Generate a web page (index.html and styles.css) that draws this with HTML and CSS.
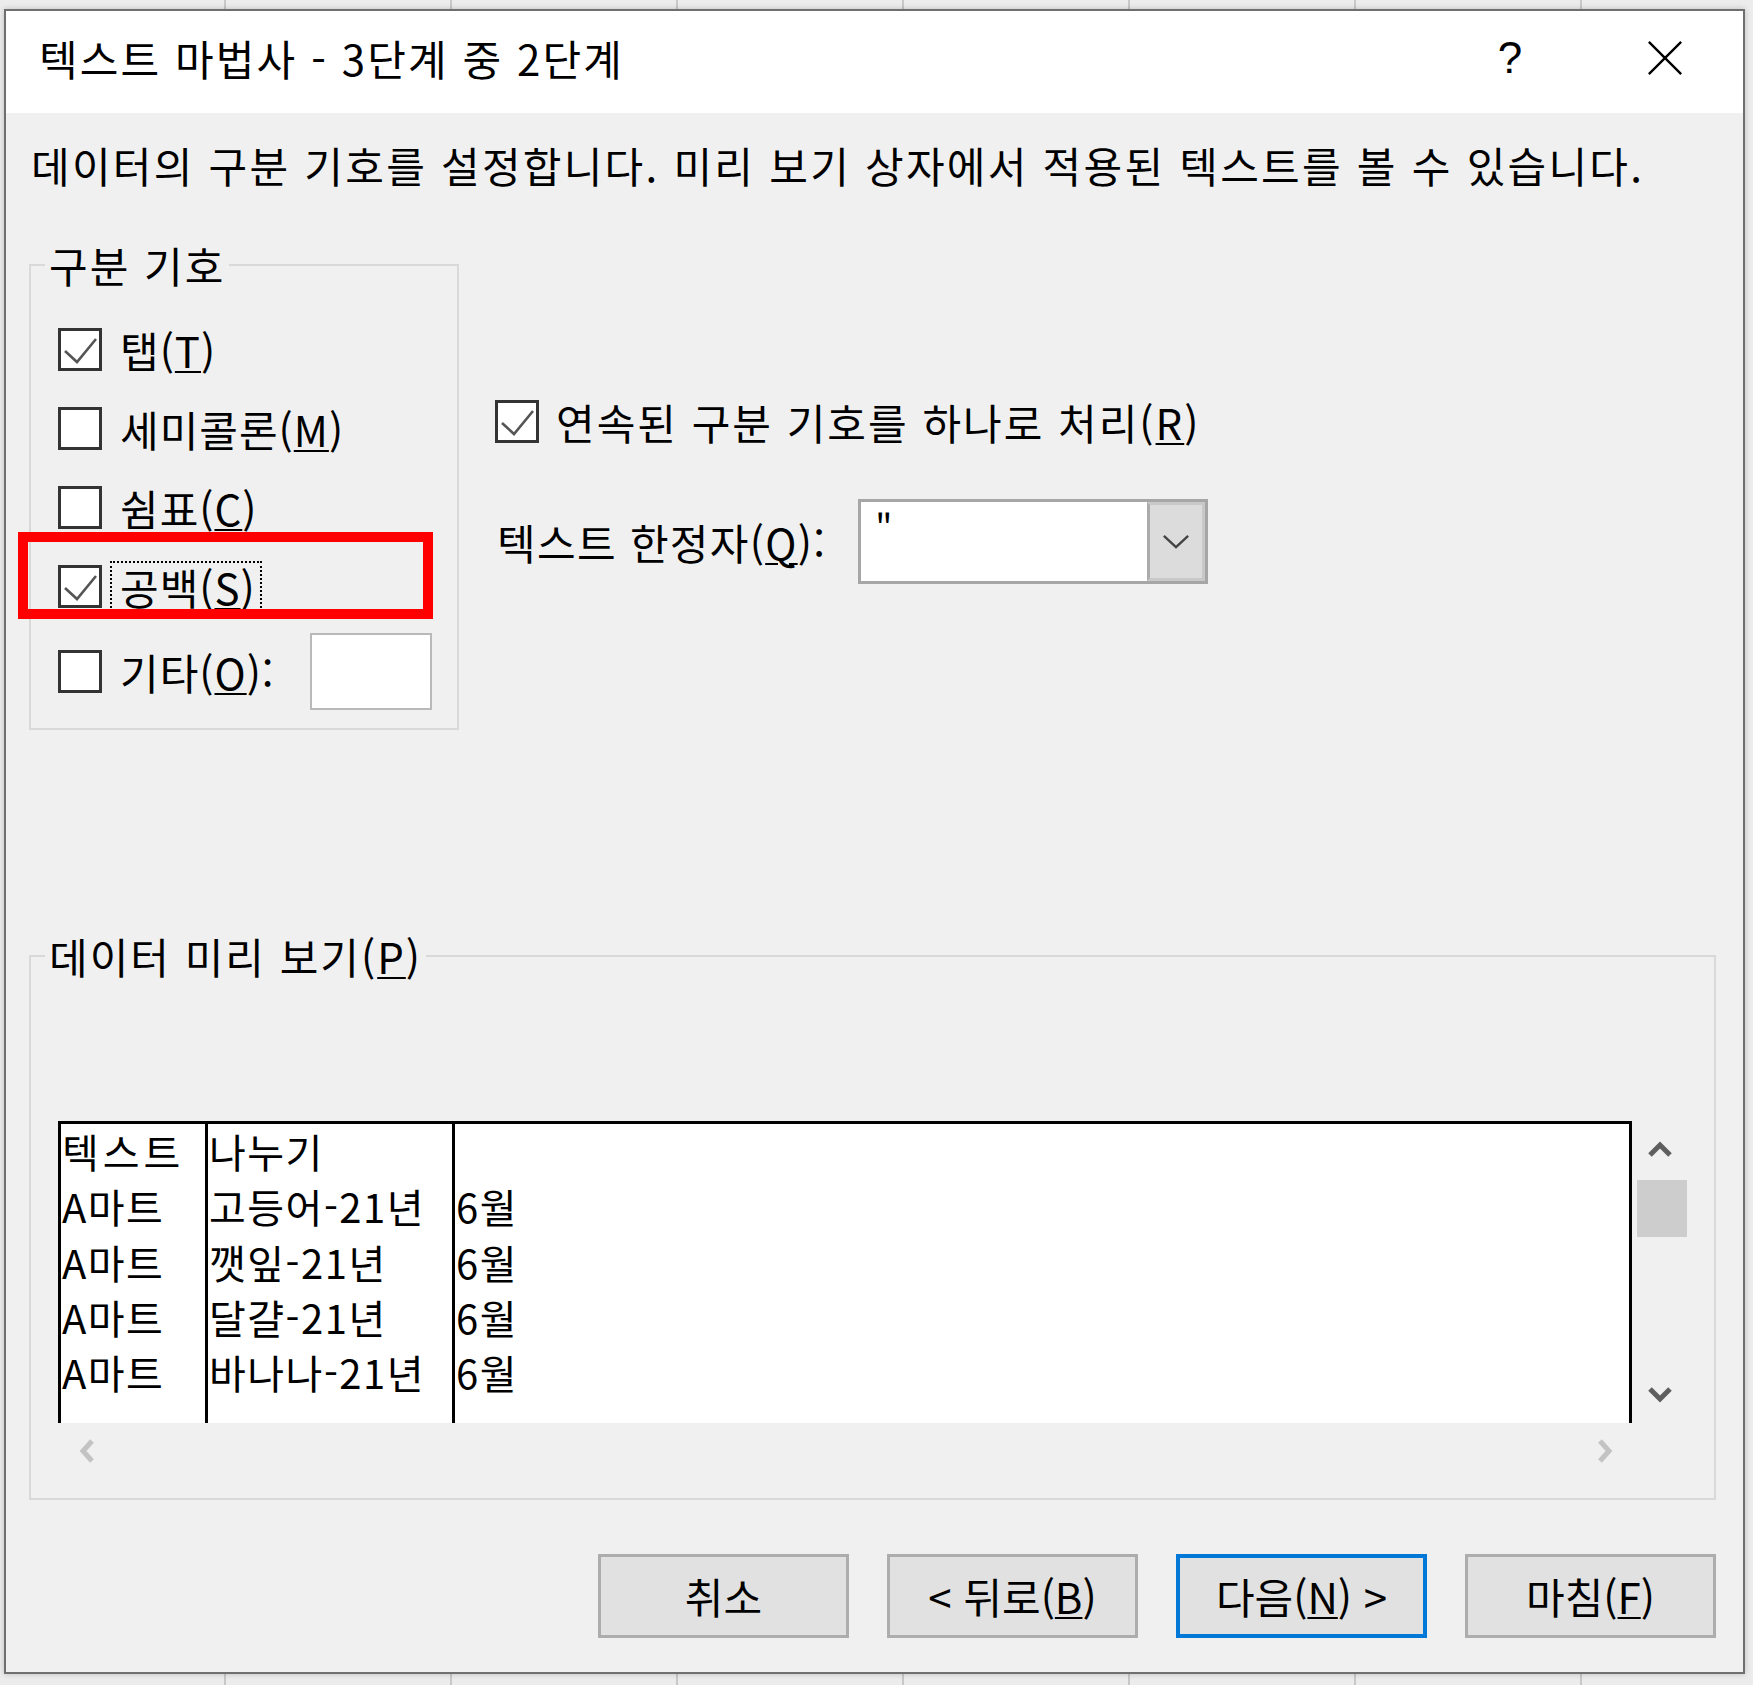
FILE: index.html
```html
<!DOCTYPE html>
<html lang="ko">
<head>
<meta charset="utf-8">
<title>텍스트 마법사</title>
<link rel="stylesheet" href="styles.css">
</head>
<body>
<div class="dialog">
  <div class="titlebar">
    <div class="title">텍스트 마법사 - 3단계 중 2단계</div>
    <span class="help">?</span>
    <svg class="close" viewBox="0 0 40 40"><path d="M3 3L37 37M37 3L3 37"/></svg>
  </div>
  <div class="content">
    <p class="desc">데이터의 구분 기호를 설정합니다. 미리 보기 상자에서 적용된 텍스트를 볼 수 있습니다.</p>
    <div class="top">
      <fieldset class="group delims">
        <legend>구분 기호</legend>
        <div class="chk-row">
          <span class="box"><svg viewBox="0 0 38 37"><path d="M4 20L16 31L35 8"/></svg></span>
          <span class="lbl">탭(<u>T</u>)</span>
        </div>
        <div class="chk-row">
          <span class="box"></span>
          <span class="lbl">세미콜론(<u>M</u>)</span>
        </div>
        <div class="chk-row">
          <span class="box"></span>
          <span class="lbl">쉼표(<u>C</u>)</span>
        </div>
        <div class="chk-row marked">
          <span class="box"><svg viewBox="0 0 38 37"><path d="M4 20L16 31L35 8"/></svg></span>
          <span class="lbl focus">공백(<u>S</u>)</span>
        </div>
        <div class="chk-row other">
          <span class="box"></span>
          <span class="lbl">기타(<u>O</u>):</span>
          <span class="textbox"></span>
        </div>
      </fieldset>
      <div class="options">
        <div class="chk-row">
          <span class="box"><svg viewBox="0 0 38 37"><path d="M4 20L16 31L35 8"/></svg></span>
          <span class="lbl near">연속된 구분 기호를 하나로 처리(<u>R</u>)</span>
        </div>
        <div class="qual-row">
          <span class="qual-lbl">텍스트 한정자(<u>Q</u>):</span>
          <div class="combo">
            <span class="combo-val">"</span>
            <span class="combo-btn"><svg viewBox="0 0 30 16"><path d="M2 2L15 14L28 2"/></svg></span>
          </div>
        </div>
      </div>
    </div>
    <fieldset class="group preview">
      <legend>데이터 미리 보기(<u>P</u>)</legend>
      <div class="pv">
        <div class="pv-data">
          <div class="col c1">
            <div>텍스트</div><div>A마트</div><div>A마트</div><div>A마트</div><div>A마트</div>
          </div>
          <div class="col c2">
            <div>나누기</div><div>고등어-21년</div><div>깻잎-21년</div><div>달걀-21년</div><div>바나나-21년</div>
          </div>
          <div class="col c3">
            <div>&nbsp;</div><div>6월</div><div>6월</div><div>6월</div><div>6월</div>
          </div>
        </div>
        <div class="vscroll">
          <span class="vbtn"><svg viewBox="0 0 26 16"><path d="M3 14L13 4L23 14"/></svg></span>
          <span class="thumb"></span>
          <span class="vfill"></span>
          <span class="vbtn"><svg viewBox="0 0 26 16"><path d="M3 2L13 12L23 2"/></svg></span>
        </div>
        <div class="hscroll">
          <span class="hbtn"><svg viewBox="0 0 16 26"><path d="M13 3L4 13L13 23"/></svg></span>
          <span class="hbtn"><svg viewBox="0 0 16 26"><path d="M3 3L12 13L3 23"/></svg></span>
        </div>
        <div class="corner"></div>
      </div>
    </fieldset>
    <div class="buttons">
      <button class="btn">취소</button>
      <button class="btn">&lt; 뒤로(<u>B</u>)</button>
      <button class="btn default">다음(<u>N</u>) &gt;</button>
      <button class="btn">마침(<u>F</u>)</button>
    </div>
  </div>
</div>
</body>
</html>
```

FILE: styles.css
```css
*, *::before, *::after { box-sizing: border-box; }
html, body { margin: 0; padding: 0; }
body {
  width: 1753px;
  height: 1685px;
  overflow: hidden;
  background-color: #ececec;
  background-image: repeating-linear-gradient(90deg, transparent 0 224px, #c8c8c8 224px 226px);
  font-family: "Noto Sans CJK KR", "Noto Sans", sans-serif;
  color: #000;
}
u { text-decoration-thickness: 2px; text-underline-offset: 3px; }

.dialog {
  margin: 9px 0 0 4px;
  width: 1741px;
  border: 2px solid #6f6f6f;
  background: #f0f0f0;
  box-shadow: 0 0 6px rgba(0, 0, 0, 0.2);
}

/* title bar */
.titlebar {
  height: 102px;
  background: #fff;
  display: flex;
  align-items: flex-start;
  padding: 24px 59px 0 33px;
}
.title {
  flex: 1;
  font-size: 42px;
  line-height: 46px;
  letter-spacing: 2.1px;
}
.help {
  width: 40px;
  text-align: center;
  font-family: "Liberation Sans", sans-serif;
  font-size: 44px;
  line-height: 46px;
}
.close {
  width: 38px;
  height: 38px;
  margin: 4px 0 0 116px;
  fill: none;
  stroke: #000;
  stroke-width: 2.5;
}

/* content */
.content {
  padding: 27px 27px 34px 23px;
}
.desc {
  margin: 0 0 53px 2px;
  font-size: 42px;
  line-height: 50px;
  letter-spacing: 2.25px;
  white-space: nowrap;
}
.top {
  display: flex;
  align-items: flex-start;
}
.group {
  margin: 0;
  border: 2px solid #d9d9d9;
  min-width: 0;
}
.group legend {
  font-size: 42px;
  line-height: 44px;
  padding: 0 4px;
  margin-left: -13px;
  letter-spacing: 2px;
}
.delims {
  width: 430px;
  padding: 23px 25px 18px 27px;
}
.chk-row {
  display: flex;
  align-items: center;
  height: 79px;
  font-size: 42px;
  line-height: 46px;
  position: relative;
}
.box {
  width: 44px;
  height: 43px;
  flex: none;
  border: 3px solid #333;
  background: #fff;
}
.box svg {
  display: block;
  width: 38px;
  height: 37px;
  fill: none;
  stroke: #555;
  stroke-width: 2.6;
}
.lbl { margin-left: 18px; white-space: nowrap; letter-spacing: 1px; }
.lbl.near { margin-left: 17px; letter-spacing: 2px; }
.lbl.focus {
  margin-left: 8px;
  padding: 0 4px 0 8px;
  border: 2px dotted #000;
  line-height: 47px;
}
.marked::after {
  content: "";
  position: absolute;
  left: -40px;
  top: -15px;
  width: 415px;
  height: 87px;
  border: 10px solid #ff0000;
}
.chk-row.other {
  margin-top: 7px;
  height: 77px;
}
.textbox {
  margin-left: auto;
  width: 122px;
  height: 77px;
  background: #fff;
  border: 2px solid #b9b9b9;
}

/* right options */
.options {
  margin-left: 36px;
  padding-top: 139px;
}
.qual-row {
  margin-top: 38px;
  display: flex;
  align-items: center;
  height: 85px;
}
.qual-lbl {
  margin-left: 2px;
  font-size: 42px;
  line-height: 46px;
  letter-spacing: 1.3px;
}
.combo {
  margin-left: 32px;
  width: 350px;
  height: 85px;
  border: 3px solid #a6a6a6;
  background: #fff;
  display: flex;
}
.combo-val {
  flex: 1;
  padding: 6px 0 0 14px;
  font-size: 36px;
  line-height: 40px;
}
.combo-btn {
  width: 58px;
  background: #dcdcdc;
  border: 3px solid #c8c8c8;
  border-left-color: #ababab;
  display: flex;
  align-items: center;
  justify-content: center;
}
.combo-btn svg {
  width: 28px;
  height: 15px;
  fill: none;
  stroke: #444;
  stroke-width: 2.6;
}

/* preview group */
.preview {
  margin-top: 204px;
  width: 1687px;
  padding: 143px 26px 19px 27px;
}
.pv {
  display: grid;
  grid-template-columns: 1fr 56px;
  grid-template-rows: 302px 56px;
}
.pv-data {
  background: #fff;
  border-top: 3px solid #000;
  border-right: 3px solid #000;
  display: flex;
  overflow: hidden;
}
.col {
  border-left: 3px solid #000;
  padding-left: 1px;
  font-size: 40px;
  line-height: 55.3px;
  letter-spacing: 1.5px;
  white-space: nowrap;
}
.c1 { width: 147px; }
.c1 div:first-child { letter-spacing: 4px; }
.c2 { width: 247px; }
.c3 { flex: 1; }
.vscroll {
  display: flex;
  flex-direction: column;
  align-items: flex-start;
}
.vbtn {
  width: 56px;
  height: 56px;
  display: flex;
  align-items: center;
  justify-content: center;
}
.vbtn svg {
  width: 26px;
  height: 16px;
  fill: none;
  stroke: #5e5e5e;
  stroke-width: 5;
}
.thumb {
  margin: 3px 0 0 5px;
  width: 50px;
  height: 57px;
  background: #cdcdcd;
}
.vfill { flex: 1; }
.hscroll {
  display: flex;
  justify-content: space-between;
  align-items: center;
  padding: 0 19px 0 21px;
}
.hbtn svg {
  display: block;
  width: 16px;
  height: 26px;
  fill: none;
  stroke: #c3c3c3;
  stroke-width: 5;
}

/* buttons */
.buttons {
  margin-top: 54px;
  display: flex;
  justify-content: flex-end;
  gap: 38px;
}
.btn {
  width: 251px;
  height: 84px;
  background: #e1e1e1;
  border: 3px solid #adadad;
  font-family: "Noto Sans CJK KR", "Noto Sans", sans-serif;
  font-size: 42px;
  line-height: 46px;
  color: #000;
  padding: 0;
}
.btn.default {
  border: 4px solid #0078d7;
}
```
